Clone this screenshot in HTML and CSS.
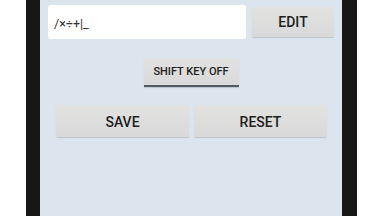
FILE: index.html
```html
<!DOCTYPE html>
<html lang="en">

<head>
    <meta charset="UTF-8">
    <meta name="viewport" content="width=device-width, initial-scale=1.0">
    <title>Keypad Editor</title>
    <link rel="stylesheet" href="styles.css">
</head>

<body>
    <div class="phone">
        <div class="screen">
            <div class="row top-row">
                <div class="entry">/×÷+|_</div>
                <button class="btn edit">EDIT</button>
            </div>
            <div class="row center-row">
                <button class="btn toggle">SHIFT KEY OFF</button>
            </div>
            <div class="row action-row">
                <button class="btn action">SAVE</button>
                <button class="btn action">RESET</button>
            </div>
        </div>
    </div>
</body>

</html>
```

FILE: styles.css
```css
body {
    margin: 0;
    background: #ffffff;
    font-family: Roboto, 'Liberation Sans', sans-serif;
    width: 384px;
    height: 216px;
    overflow: hidden;
}

.phone {
    margin-left: 26px;
    width: 302px;
    height: 216px;
    background: #161817;
    padding: 0 15px 0 14px;
}

.screen {
    height: 100%;
    background: #dce5ee;
    display: flex;
    flex-direction: column;
}

.row {
    display: flex;
}

.top-row {
    padding: 5px 8px 0 8px;
    align-items: center;
    justify-content: space-between;
}

.entry {
    width: 198px;
    height: 34px;
    box-sizing: border-box;
    background: #ffffff;
    border-radius: 3px;
    padding: 2px 6px 0 6px;
    display: flex;
    align-items: center;
    font-size: 12.5px;
    color: #333;
}

.btn {
    font-family: Roboto, 'Liberation Sans', sans-serif;
    font-weight: 500;
    color: #1e1e1e;
    background: linear-gradient(to bottom, #e2e2e1, #d8d9d8);
    border: none;
    border-radius: 2px;
    box-shadow: 0 1px 1px rgba(0, 0, 0, 0.15);
    padding: 0;
    cursor: pointer;
}

.edit {
    width: 82px;
    height: 30px;
    font-size: 14px;
}

.center-row {
    justify-content: center;
    padding-top: 19px;
}

.toggle {
    width: 95px;
    height: 29px;
    font-size: 11px;
    border-bottom: 2px solid #555a5e;
    border-radius: 2px 2px 0 0;
}

.action-row {
    padding: 18px 15px 0 16px;
    gap: 5px;
}

.action {
    flex: 1;
    height: 32px;
    padding-top: 2px;
    font-size: 14px;
}
```
